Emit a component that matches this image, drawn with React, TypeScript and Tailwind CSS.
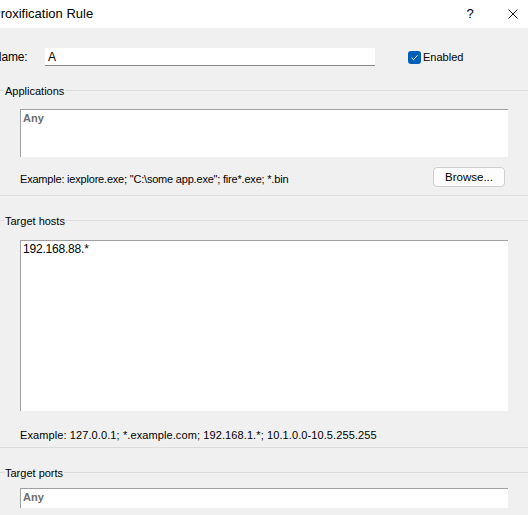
import React from 'react';

const font = "font-['Liberation_Sans',Arial,sans-serif]";

const TextArea = ({ className, children }: { className: string; children?: React.ReactNode }) => (
  <div className={`bg-white border-t border-l border-[#a0a0a0] pl-[2px] pt-[1px] leading-[14px] ${className}`}>
    {children}
  </div>
);

const Group = ({ title, className, children }: { title: string; className?: string; children: React.ReactNode }) => (
  <fieldset className={`mx-[4px] border-t border-b border-[#dcdcdc] ${className ?? ''}`}>
    <legend className="ml-[8px] px-[1px] text-[11px] leading-[16px] text-black">
      <span className="relative top-[1px]">{title}</span>
    </legend>
    {children}
  </fieldset>
);

export default function App() {
  return (
    <div className={`w-[528px] h-[515px] overflow-hidden bg-[#f0f0f0] ${font} text-[11px] text-black`}>
      <div className="-ml-[8px] w-[544px]">
        {/* title bar */}
        <div className="h-[28px] bg-white flex items-center">
          <span className="flex-1 text-[13px] leading-[16px]">Proxification Rule</span>
          <span className="w-[20px] text-center text-[13px] leading-[16px] mr-[10px]">?</span>
          <div className="w-[46px] h-[28px] flex items-center justify-center">
            <svg width="10" height="10" viewBox="0 0 10 10" stroke="#1a1a1a" strokeWidth="1" fill="none">
              <path d="M0.5 0.5 L9.5 9.5 M9.5 0.5 L0.5 9.5" />
            </svg>
          </div>
        </div>

        {/* name row */}
        <div className="mt-[20px] h-[18px] flex items-center">
          <span className="w-[53px] pl-[1px] text-[12px] tracking-[-0.2px]">Name:</span>
          <div className="w-[330px] h-[18px] bg-white border-b border-[#868686] flex items-center pl-[3px] text-[12px]">A</div>
          <div className="ml-[33px] flex items-center gap-[2px]">
            <div className="w-[13px] h-[13px] rounded-[3px] bg-[#005fb8] flex items-center justify-center">
              <svg width="9" height="9" viewBox="0 0 9 9" fill="none" stroke="white" strokeWidth="1">
                <path d="M1.5 4.8 L3.5 6.7 L7.5 2.3" />
              </svg>
            </div>
            <span className="text-[11px]">Enabled</span>
          </div>
        </div>

        <Group title="Applications" className="mt-[16px] pb-[8px]">
          <div className="px-[24px]">
            <TextArea className="mt-[11px] h-[48px]">
              <span className="font-bold text-[#6d6d6d]">Any</span>
            </TextArea>
            <div className="mt-[10px] h-[20px] flex items-center justify-between">
              <span className="pt-[4px] tracking-[-0.2px]">Example: iexplore.exe; "C:\some app.exe"; fire*.exe; *.bin</span>
              <button className="mr-[3px] w-[72px] h-[20px] rounded-[4px] border border-[#cfcfcf] bg-[#fdfdfd] text-[11.5px] leading-[16px]">
                Browse...
              </button>
            </div>
          </div>
        </Group>

        <Group title="Target hosts" className="mt-[16px] pb-[4px]">
          <div className="px-[24px]">
            <TextArea className="mt-[12px] h-[171px]">
              <span className="text-[12px] tracking-[-0.2px]">192.168.88.*</span>
            </TextArea>
            <div className="mt-[16px] h-[16px] flex items-center tracking-[0.1px]">
              Example: 127.0.0.1; *.example.com; 192.168.1.*; 10.1.0.0-10.5.255.255
            </div>
          </div>
        </Group>

        <Group title="Target ports" className="mt-[16px] pb-[8px]">
          <div className="px-[24px]">
            <TextArea className="mt-[8px] h-[20px]">
              <span className="font-bold text-[#6d6d6d]">Any</span>
            </TextArea>
          </div>
        </Group>
      </div>
    </div>
  );
}
